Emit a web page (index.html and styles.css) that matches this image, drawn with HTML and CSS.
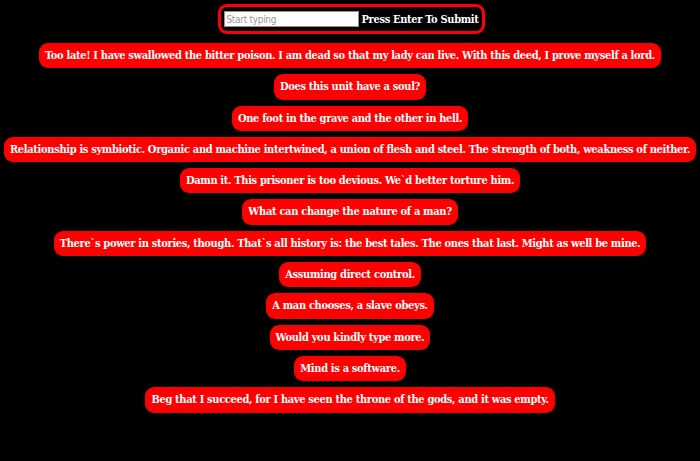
FILE: index.html
```html
<!DOCTYPE html>
<html>
<head>
<meta charset="utf-8">
<link rel="stylesheet" href="styles.css">
</head>
<body>
<div class="page">
  <form class="entry">
    <input class="entry-input" type="text" placeholder="Start typing">
    <span class="entry-label">Press Enter To Submit</span>
  </form>
  <div class="list">
    <div class="bubble">Too late! I have swallowed the bitter poison. I am dead so that my lady can live. With this deed, I prove myself a lord.</div>
    <div class="bubble">Does this unit have a soul?</div>
    <div class="bubble">One foot in the grave and the other in hell.</div>
    <div class="bubble">Relationship is symbiotic. Organic and machine intertwined, a union of flesh and steel. The strength of both, weakness of neither.</div>
    <div class="bubble">Damn it. This prisoner is too devious. We`d better torture him.</div>
    <div class="bubble">What can change the nature of a man?</div>
    <div class="bubble">There`s power in stories, though. That`s all history is: the best tales. The ones that last. Might as well be mine.</div>
    <div class="bubble">Assuming direct control.</div>
    <div class="bubble">A man chooses, a slave obeys.</div>
    <div class="bubble">Would you kindly type more.</div>
    <div class="bubble">Mind is a software.</div>
    <div class="bubble">Beg that I succeed, for I have seen the throne of the gods, and it was empty.</div>
  </div>
</div>
</body>
</html>
```
FILE: styles.css
```css
html, body {
  margin: 0;
  padding: 0;
  background: #000;
}
.page {
  display: flex;
  flex-direction: column;
  align-items: center;
  padding-top: 4px;
  font-family: "DejaVu Serif Condensed", "DejaVu Serif", serif;
  font-stretch: condensed;
  font-weight: bold;
  font-size: 11px;
  letter-spacing: -0.33px;
  color: #fff;
}
.entry {
  display: flex;
  align-items: center;
  gap: 2px;
  border: 3px solid #f00;
  border-radius: 9px;
  padding: 4px 3px 4px 3px;
  margin: 0 0 0 3px;
}
.entry-input {
  width: 135px;
  height: 16px;
  box-sizing: border-box;
  border: 1px solid #a88;
  padding: 0 1px;
  font-family: "DejaVu Sans", sans-serif;
  font-stretch: condensed;
  letter-spacing: -0.3px;
  font-size: 10px;
  font-weight: normal;
  background: #fff;
  color: #000;
}
.entry-input::placeholder {
  color: #999;
}
.entry-label {
  white-space: nowrap;
}
.list {
  display: flex;
  flex-direction: column;
  align-items: center;
  gap: 6px;
  margin-top: 9px;
}
.bubble {
  background: #f00;
  color: #fff;
  border-radius: 9px;
  padding: 5px 6px;
  line-height: 15.3px;
  white-space: nowrap;
}
```
